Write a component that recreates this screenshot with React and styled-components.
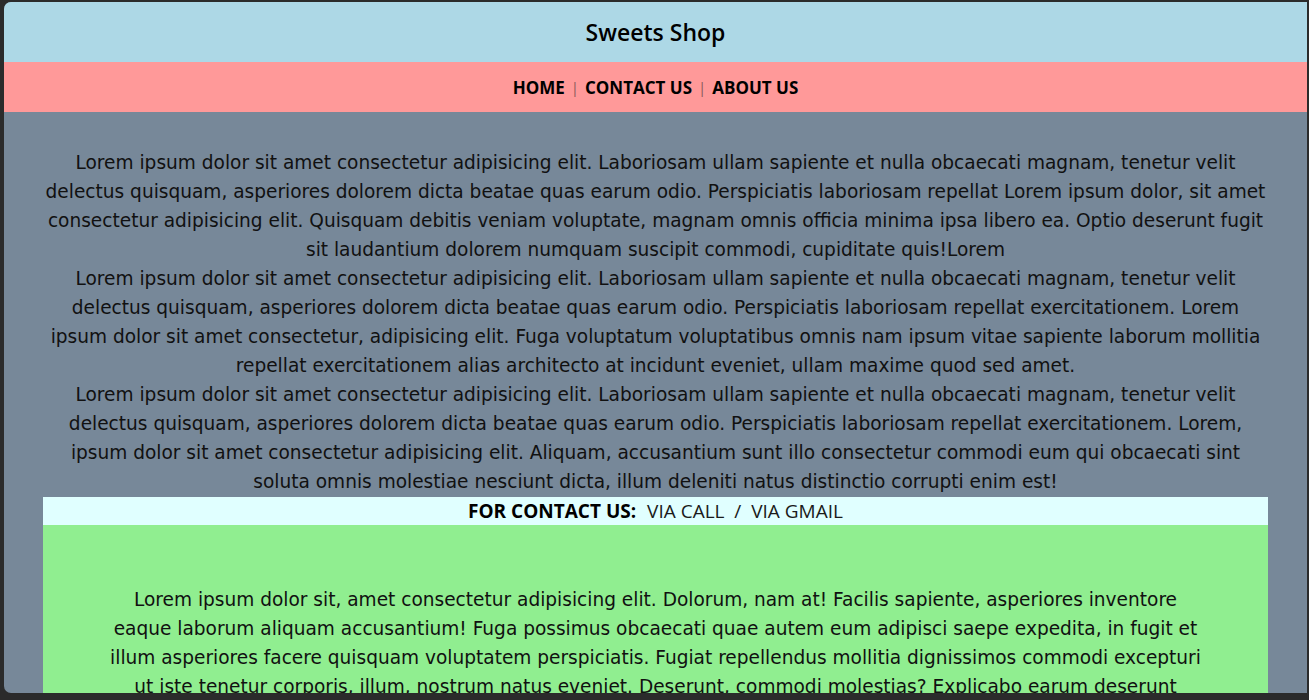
import React from 'react'
import styled, { createGlobalStyle } from 'styled-components'

const GlobalStyle = createGlobalStyle`
  html, body {
    margin: 0;
    padding: 0;
    background: #2b2b2b;
    overflow: hidden;
  }
`

const para1 =
  'Lorem ipsum dolor sit amet consectetur adipisicing elit. Laboriosam ullam sapiente et nulla obcaecati magnam, tenetur velit delectus quisquam, asperiores dolorem dicta beatae quas earum odio. Perspiciatis laboriosam repellat Lorem ipsum dolor, sit amet consectetur adipisicing elit. Quisquam debitis veniam voluptate, magnam omnis officia minima ipsa libero ea. Optio deserunt fugit sit laudantium dolorem numquam suscipit commodi, cupiditate quis!Lorem'
const para2 =
  'Lorem ipsum dolor sit amet consectetur adipisicing elit. Laboriosam ullam sapiente et nulla obcaecati magnam, tenetur velit delectus quisquam, asperiores dolorem dicta beatae quas earum odio. Perspiciatis laboriosam repellat exercitationem. Lorem ipsum dolor sit amet consectetur, adipisicing elit. Fuga voluptatum voluptatibus omnis nam ipsum vitae sapiente laborum mollitia repellat exercitationem alias architecto at incidunt eveniet, ullam maxime quod sed amet.'
const para3 =
  'Lorem ipsum dolor sit amet consectetur adipisicing elit. Laboriosam ullam sapiente et nulla obcaecati magnam, tenetur velit delectus quisquam, asperiores dolorem dicta beatae quas earum odio. Perspiciatis laboriosam repellat exercitationem. Lorem, ipsum dolor sit amet consectetur adipisicing elit. Aliquam, accusantium sunt illo consectetur commodi eum qui obcaecati sint soluta omnis molestiae nesciunt dicta, illum deleniti natus distinctio corrupti enim est!'
const greenText =
  'Lorem ipsum dolor sit, amet consectetur adipisicing elit. Dolorum, nam at! Facilis sapiente, asperiores inventore eaque laborum aliquam accusantium! Fuga possimus obcaecati quae autem eum adipisci saepe expedita, in fugit et illum asperiores facere quisquam voluptatem perspiciatis. Fugiat repellendus mollitia dignissimos commodi excepturi ut iste tenetur corporis, illum, nostrum natus eveniet. Deserunt, commodi molestias? Explicabo earum deserunt quibusdam, voluptates sint nemo rerum ipsa molestias facere.'

export default function App() {
  return (
    <>
      <GlobalStyle />
      <Window>
        <Header>Sweets Shop</Header>
        <Nav>
          <NavLink>HOME</NavLink>
          <Sep>|</Sep>
          <NavLink>CONTACT US</NavLink>
          <Sep>|</Sep>
          <NavLink>ABOUT US</NavLink>
        </Nav>
        <Main>
          <Intro>
            <Para>{para1}</Para>
            <Para>{para2}</Para>
            <Para>{para3}</Para>
          </Intro>
          <ContactBar>
            <b>FOR CONTACT US:</b> VIA CALL &nbsp;/&nbsp; VIA GMAIL
          </ContactBar>
          <GreenBox>
            <Para>{greenText}</Para>
          </GreenBox>
        </Main>
      </Window>
    </>
  )
}

const Window = styled.div`
  margin: 2px 2px 0 4px;
  height: 691px;
  overflow: hidden;
  background: #778899;
  border-radius: 7px 0 0 7px;
`

const Header = styled.header`
  height: 60px;
  display: flex;
  align-items: center;
  justify-content: center;
  background: #add8e6;
  font-family: 'Open Sans', sans-serif;
  font-weight: 600;
  font-size: 23px;
  color: #000;
`

const Nav = styled.nav`
  height: 50px;
  display: flex;
  align-items: center;
  justify-content: center;
  gap: 6px;
  background: #ff9999;
  font-family: 'Open Sans', sans-serif;
  font-size: 17px;
`

const NavLink = styled.span`
  font-weight: 700;
  color: #000;
`

const Sep = styled.span`
  color: #8a5a5a;
  font-size: 15px;
`

const Main = styled.main`
  width: 94%;
  margin: 0 auto;
  padding-top: 36px;
`

const Intro = styled.div`
  text-align: center;
`

const Para = styled.div`
  font-family: 'DejaVu Sans', sans-serif;
  font-size: 18.56px;
  line-height: 29px;
  color: #111;
  text-align: center;
`

const ContactBar = styled.div`
  margin-top: 1px;
  height: 28px;
  display: flex;
  align-items: center;
  justify-content: center;
  gap: 6px;
  background: #e0ffff;
  font-family: 'Open Sans', sans-serif;
  font-size: 19px;
  color: #1a1a1a;
  white-space: pre;

  b {
    font-weight: 700;
    color: #000;
  }
`

const GreenBox = styled.section`
  background: #90ee90;
  padding: 60px 62px;
`
